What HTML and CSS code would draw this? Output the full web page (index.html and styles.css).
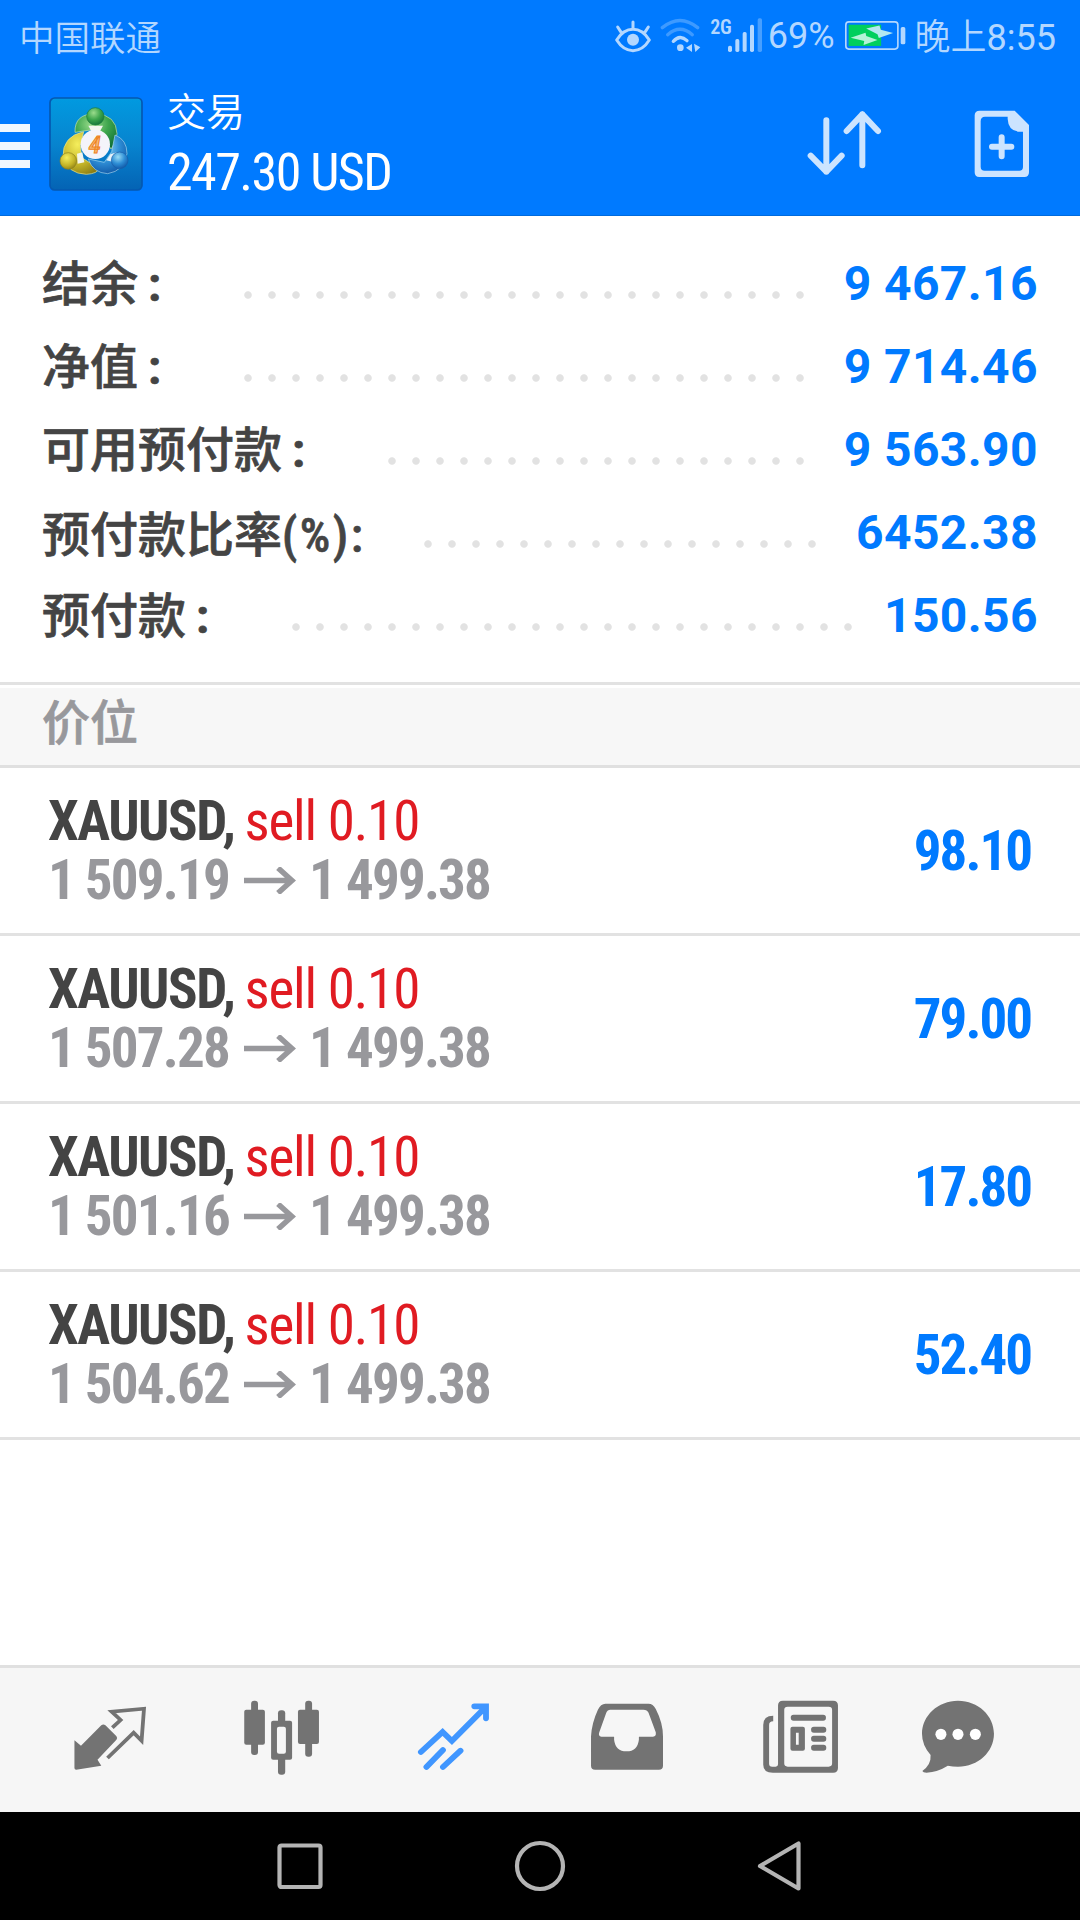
FILE: index.html
```html
<!DOCTYPE html>
<html lang="zh-CN">
<head>
<meta charset="utf-8">
<title>交易</title>
<link rel="stylesheet" href="styles.css">
</head>
<body>
<div class="screen">
  <header class="header">
    <div class="status">
      <span class="carrier">中国联通</span>
      <svg class="status-icons" viewBox="0 0 453 120" width="151" height="40">
        <g fill="none" stroke="#b3d7ff" stroke-width="9" stroke-linecap="round" stroke-linejoin="round">
          <path d="M14 78Q34 46 63 46Q92 46 112 78Q92 110 63 110Q34 110 14 78Z"/>
          <path d="M63 24V42M17 39L26 53M109 39L100 53"/>
        </g>
        <circle cx="63" cy="77" r="18" fill="#b3d7ff"/>
        <g fill="none" stroke="#b3d7ff" stroke-width="10" stroke-linecap="round">
          <path d="M151 41Q204 -2 257 41" opacity=".35"/>
          <path d="M167 62Q204 30 241 62" opacity=".35"/>
          <path d="M184 82Q204 60 225 80"/>
        </g>
        <circle cx="205" cy="101" r="10" fill="#b3d7ff"/>
        <path d="M222 101L240 90V114ZM246 89L265 100L250 114Z" fill="#b3d7ff"/>
        <text class="net" x="295" y="59">2G</text>
        <g fill="#b3d7ff">
          <rect x="348" y="95" width="12" height="19" rx="5"/>
          <rect x="370" y="75" width="12" height="39" rx="5"/>
          <rect x="392" y="54" width="12" height="60" rx="5"/>
          <rect x="414" y="32" width="12" height="82" rx="5"/>
          <rect x="437" y="13" width="13" height="101" rx="5" opacity=".4"/>
        </g>
      </svg>
      <span class="percent">69%</span>
      <svg class="battery" viewBox="0 0 184 90" width="61" height="30">
        <rect x="2.500" y="2.500" width="157" height="82" rx="9" fill="none" stroke="#b3d7ff" stroke-width="5"/>
        <rect x="11" y="11" width="98" height="64" fill="#00cf5d"/>
        <path d="M17 50L62 35L64 45L98 57L56 72L58 60Z" fill="#b3f3d8"/>
        <path d="M64 22L104 13L108 26L145 36L102 51L98 40Z" fill="#b3e8f0"/>
        <rect x="168" y="18" width="14" height="52" rx="5" fill="#b3d7ff"/>
      </svg>
      <span class="clock">晚上<b>8:55</b></span>
    </div>
    <div class="appbar">
      <div class="menu"><i></i><i></i><i></i></div>
      <svg class="logo" viewBox="0 0 282 282" width="94" height="94">
        <defs>
          <linearGradient id="bg" x1="0" y1="0" x2="0" y2="1"><stop offset="0" stop-color="#019ae0"/><stop offset=".5" stop-color="#0784cf"/><stop offset="1" stop-color="#0463b4"/></linearGradient>
          <radialGradient id="gr" cx=".4" cy=".3" r=".8"><stop offset="0" stop-color="#9bdc8c"/><stop offset=".5" stop-color="#3da54c"/><stop offset="1" stop-color="#0c6b35"/></radialGradient>
          <radialGradient id="ye" cx=".4" cy=".3" r=".8"><stop offset="0" stop-color="#f5ee5c"/><stop offset=".6" stop-color="#c3b327"/><stop offset="1" stop-color="#857814"/></radialGradient>
          <radialGradient id="bl" cx=".4" cy=".3" r=".8"><stop offset="0" stop-color="#9adcf5"/><stop offset=".5" stop-color="#2f8fd6"/><stop offset="1" stop-color="#0a4d9e"/></radialGradient>
        </defs>
        <rect x="3" y="3" width="276" height="276" rx="14" fill="url(#bg)" stroke="#0558b0" stroke-width="5"/>
        <path d="M78 106Q76 50 140 50Q202 54 204 110Q204 136 186 156L150 98H130Z" fill="url(#gr)" stroke="#cfe6a8" stroke-width="2"/>
        <path d="M104 104Q40 118 42 180Q56 230 112 232Q146 230 150 214L98 182L94 146Z" fill="url(#ye)" stroke="#efe88e" stroke-width="2"/>
        <path d="M118 186Q132 228 176 230Q226 222 234 170Q234 128 198 114L188 164L166 196Z" fill="url(#bl)" stroke="#a5d6ee" stroke-width="2"/>
        <path d="M118 86L162 86L150 108H130ZM84 170L100 166L106 196L86 200Z" fill="#f4f6ee"/>
        <path d="M184 172L204 166L196 196L172 190Z" fill="#e4f2fa"/>
        <circle cx="139" cy="58" r="26" fill="url(#gr)" stroke="#1b7a3a" stroke-width="2"/>
        <circle cx="58" cy="192" r="25" fill="url(#ye)" stroke="#8c8020" stroke-width="2"/>
        <circle cx="212" cy="190" r="25" fill="url(#bl)" stroke="#1a5ca8" stroke-width="2"/>
        <circle cx="139" cy="142" r="44" fill="#f4f4fa"/>
        <text class="logo-digit" x="137" y="169">4</text>
      </svg>
      <div class="heading">
        <div class="title">交易</div>
        <div class="total">247.30 USD</div>
      </div>
      <svg class="sort" viewBox="80 85 235 210" width="78.333" height="70">
        <path d="M144 122V276M97 228L144 276L190 228M252 257V104M205 154L252 104L299 154" fill="none" stroke="#cce4ff" stroke-width="18" stroke-linecap="round" stroke-linejoin="round"/>
      </svg>
      <svg class="add" viewBox="580 85 175 215" width="58.333" height="71.667">
        <path fill="#cce4ff" fill-rule="evenodd" d="M600 93H705L748 136V278Q748 292 734 292H599Q585 292 585 278V107Q585 93 600 93ZM616 111H684V118Q686 156 722 156H730V262Q730 273 719 273H615Q603 273 603 261V125Q603 111 616 111Z"/>
        <path d="M666 173V230M637 201H695" stroke="#cce4ff" stroke-width="18" stroke-linecap="round"/>
      </svg>
    </div>
  </header>

  <section class="summary">
    <div class="line"><span class="label">结余<b>:</b></span><i class="dots" style="--n:24"></i><span class="value">9 467.16</span></div>
    <div class="line"><span class="label">净值<b>:</b></span><i class="dots" style="--n:24"></i><span class="value">9 714.46</span></div>
    <div class="line"><span class="label">可用预付款<b>:</b></span><i class="dots" style="--n:18"></i><span class="value">9 563.90</span></div>
    <div class="line"><span class="label">预付款比率<em>(%):</em></span><i class="dots" style="--n:17"></i><span class="value">6452.38</span></div>
    <div class="line short"><span class="label">预付款<b>:</b></span><i class="dots" style="--n:24"></i><span class="value">150.56</span></div>
  </section>

  <h2 class="section">价位</h2>

  <ul class="positions">
    <li class="position">
      <div class="info">
        <div class="deal"><span class="symbol">XAUUSD,</span><span class="side">sell 0.10</span></div>
        <div class="prices"><span>1 509.19</span><svg class="arrow" viewBox="0 0 52 27" width="52" height="27"><path d="M0 13.500H47M34 1L48 13.500L34 26"/></svg><span>1 499.38</span></div>
      </div>
      <span class="profit">98.10</span>
    </li>
    <li class="position">
      <div class="info">
        <div class="deal"><span class="symbol">XAUUSD,</span><span class="side">sell 0.10</span></div>
        <div class="prices"><span>1 507.28</span><svg class="arrow" viewBox="0 0 52 27" width="52" height="27"><path d="M0 13.500H47M34 1L48 13.500L34 26"/></svg><span>1 499.38</span></div>
      </div>
      <span class="profit">79.00</span>
    </li>
    <li class="position">
      <div class="info">
        <div class="deal"><span class="symbol">XAUUSD,</span><span class="side">sell 0.10</span></div>
        <div class="prices"><span>1 501.16</span><svg class="arrow" viewBox="0 0 52 27" width="52" height="27"><path d="M0 13.500H47M34 1L48 13.500L34 26"/></svg><span>1 499.38</span></div>
      </div>
      <span class="profit">17.80</span>
    </li>
    <li class="position">
      <div class="info">
        <div class="deal"><span class="symbol">XAUUSD,</span><span class="side">sell 0.10</span></div>
        <div class="prices"><span>1 504.62</span><svg class="arrow" viewBox="0 0 52 27" width="52" height="27"><path d="M0 13.500H47M34 1L48 13.500L34 26"/></svg><span>1 499.38</span></div>
      </div>
      <span class="profit">52.40</span>
    </li>
  </ul>

  <nav class="tabs">
    <svg class="tab" viewBox="194.400 145 250 250" preserveAspectRatio="none">
      <path fill="currentColor" d="M216 272L235 288L294 227Q300 222 306 227L338 260Q342 265 338 270L283 330L294 348L221 360Q216 360 216 355Z"/>
      <path fill="none" stroke="currentColor" stroke-width="11" d="M326 234L350 211L324 186L418 177L411 273L388 249L312 325"/>
    </svg>
    <svg class="tab" viewBox="693.800 145 250 250" preserveAspectRatio="none">
      <g fill="currentColor">
        <rect x="729" y="153" width="20" height="163" rx="9"/><rect x="709" y="180" width="60" height="105" rx="6"/>
        <rect x="886" y="153" width="20" height="168" rx="9"/><rect x="865" y="180" width="61" height="103" rx="6"/>
        <rect x="807" y="182" width="21" height="40" rx="9"/><rect x="807" y="320" width="21" height="55" rx="9"/>
      </g>
      <path fill="currentColor" fill-rule="evenodd" d="M793 213H842Q848 213 848 219V324Q848 330 842 330H793Q787 330 787 324V219Q787 213 793 213ZM810 231Q804 231 804 237V306Q804 312 810 312H824Q830 312 830 306V237Q830 231 824 231Z"/>
    </svg>
    <svg class="tab active" viewBox="1193.200 145 250 250" preserveAspectRatio="none">
      <path fill="none" stroke="currentColor" stroke-width="17" stroke-linecap="round" stroke-linejoin="miter" d="M1222 307L1285 247L1312 274L1408 174M1238 352L1286 301M1286 352L1337 303M1377 170H1411V206"/>
    </svg>
    <svg class="tab" viewBox="127.600 145 250 250" preserveAspectRatio="none">
      <path fill="currentColor" fill-rule="evenodd" d="M148 260Q150 220 168 180Q176 162 190 162H315Q328 162 336 178Q357 220 357 260V348Q357 360 345 360H160Q148 360 148 348ZM204 180H300Q311 180 315 189L336 248Q338 261 328 261H287V270Q283 305 251 305Q219 305 215 270V261H178Q168 260 172 248L192 190Q196 180 204 180Z"/>
    </svg>
    <svg class="tab" viewBox="632.800 145 250 250" preserveAspectRatio="none">
      <g fill="currentColor">
        <path fill-rule="evenodd" d="M705 153H851Q865 153 865 167V355Q865 369 851 369H676Q648 369 648 345V226Q648 198 677 198V215Q665 215 665 226V342Q665 351 674 351H684Q691 351 691 344V167Q691 153 705 153ZM719 171Q709 171 709 181V341Q709 351 719 351H838Q848 351 848 341V181Q848 171 838 171Z"/>
        <rect x="728" y="195" width="102" height="18" rx="8"/>
        <path fill-rule="evenodd" d="M733 231H763Q769 231 769 237V297Q769 303 763 303H733Q727 303 727 297V237Q727 231 733 231ZM743 249V285H751V249Z"/>
        <rect x="787" y="231" width="44" height="18" rx="8"/><rect x="787" y="258" width="44" height="18" rx="8"/><rect x="787" y="285" width="44" height="18" rx="8"/>
      </g>
    </svg>
    <svg class="tab" viewBox="1088.700 145 250 250" preserveAspectRatio="none">
      <path fill="currentColor" d="M1213.500 153C1272 153 1318 198 1318 252S1272 351 1213.500 351Q1198 351 1184 348Q1155 367 1122 369Q1112 369 1110 364Q1136 345 1134 316Q1109 286 1109 252C1109 198 1156 153 1213.500 153Z"/>
      <g fill="#fff"><ellipse cx="1164" cy="254" rx="16" ry="17"/><ellipse cx="1213.500" cy="254" rx="16" ry="17"/><ellipse cx="1264" cy="254" rx="16" ry="17"/></g>
    </svg>
  </nav>

  <div class="sysnav">
    <svg viewBox="0 0 60 60" width="60" height="60"><rect x="9.500" y="9.500" width="41" height="41.500" rx="2" /></svg>
    <svg viewBox="0 0 60 60" width="60" height="60"><circle cx="30" cy="30" r="23"/></svg>
    <svg viewBox="0 0 60 60" width="60" height="60"><path d="M48.500 7.500V52.500L10 30Z"/></svg>
  </div>
</div>
</body>
</html>
```
FILE: styles.css
```css
* { box-sizing: border-box; }

body {
  margin: 0;
  background: #fff;
  font-family: Roboto, "Noto Sans CJK SC", sans-serif;
}

svg { display: block; flex: none; }

.screen {
  width: 1080px;
  height: 1920px;
  display: flex;
  flex-direction: column;
}

/* header */
.header {
  height: 216px;
  flex: none;
  background: #007aff;
  border-bottom: 1px solid #006bdd;
  color: #fff;
}

.status {
  height: 76px;
  display: flex;
  align-items: center;
  padding: 0 24px 0 19px;
  color: #b3d7ff;
  font-size: 36px;
  line-height: 76px;
}

.carrier {
  font: 350 35.500px/72px "Noto Sans CJK SC", sans-serif;
  margin: -4px auto 0 0;
}

.status-icons { margin-top: -8px; }

.net {
  font: 600 60px "Roboto Condensed", Roboto, sans-serif;
  letter-spacing: -1px;
  fill: #b3d7ff;
}

.percent { margin: -4px 10px 0 5px; }

.battery { margin: -5px 9px 0 0; }

.clock { font-weight: 350; }
.clock b { font-weight: 400; }

.appbar {
  height: 139px;
  display: flex;
  align-items: flex-start;
}

.menu {
  width: 30px;
  display: flex;
  flex-direction: column;
  gap: 10px;
  padding-top: 48px;
}

.menu i { height: 8px; background: #f0f7ff; }

.logo { margin: 21px 0 0 19px; }

.logo-digit {
  font: italic 500 74px "Roboto Condensed", Roboto, sans-serif;
  fill: #f8ba72;
  stroke: #ee8222;
  stroke-width: 3px;
  text-anchor: middle;
}

.heading {
  flex: 1;
  padding: 7px 0 0 24px;
}

.title {
  height: 59px;
  font: 350 39px/53px "Noto Sans CJK SC", sans-serif;
}

.total {
  font: 400 52px/62px "Roboto Condensed", Roboto, sans-serif;
  letter-spacing: -1.550px;
}

.sort { margin: 32px 89px 0 0; }
.add { margin: 32px 49px 0 0; }

/* account summary */
.summary {
  height: 466px;
  flex: none;
  padding: 26px 42px 0 43px;
}

.line {
  height: 83px;
  display: flex;
  align-items: center;
  line-height: 83px;
}

.label {
  font: 500 48px/83px "Noto Sans CJK SC", sans-serif;
  color: #444;
  -webkit-text-stroke: .700px #444;
  margin: -2px 0 0 -1px;
}

.label b {
  font-family: Roboto, sans-serif;
  font-weight: 700;
  margin-left: 10px;
}

.label em {
  font: 500 48px/48px "Roboto Condensed", Roboto, sans-serif;
  letter-spacing: 2.500px;
}

.dots {
  width: calc(24px * var(--n));
  height: 8px;
  margin: 22px 32px 0 auto;
  background: radial-gradient(circle at 12px 4px, #e2e2e2 3.300px, transparent 4.200px) 0 0 / 24px 8px;
}

.short .dots { margin-right: 24px; }

.value {
  font-size: 48px;
  font-weight: 700;
  letter-spacing: .400px;
  color: #007aff;
}

/* section heading */
.section {
  height: 86px;
  flex: none;
  margin: 0;
  padding-left: 42px;
  border-top: 3px solid #e2e2e2;
  border-bottom: 3px solid #e0e0e0;
  background: linear-gradient(#fff 3px, #f7f7f7 3px);
  color: #98989c;
  -webkit-text-stroke: .700px #98989c;
  font: 500 48px/69px "Noto Sans CJK SC", sans-serif;
}

/* open positions */
.positions {
  flex: 1;
  margin: 0;
  padding: 0;
  list-style: none;
}

.position {
  height: 168px;
  display: flex;
  align-items: center;
  justify-content: space-between;
  padding: 0 49px 0 48px;
  border-bottom: 3px solid #e2e2e2;
  font: 700 55px/59px "Roboto Condensed", Roboto, sans-serif;
  letter-spacing: -1.500px;
}

.deal, .prices { display: flex; align-items: center; }

.symbol { color: #444; }

.side {
  margin-left: 10px;
  font-weight: 400;
  letter-spacing: -1.100px;
  color: #e01b22;
}

.prices {
  color: #98989c;
  letter-spacing: -1.800px;
}

.arrow {
  margin: 0 13px 0 15px;
  fill: none;
  stroke: #98989c;
  stroke-width: 5.500px;
}

.profit {
  padding-top: 1px;
  letter-spacing: -2px;
  color: #007aff;
}

/* bottom tabs */
.tabs {
  height: 147px;
  flex: none;
  display: grid;
  grid-template-columns: 172px 172px 172px 174px 174px 140px;
  align-items: center;
  justify-items: center;
  padding-left: 24px;
  border-top: 3px solid #e0e0e0;
  background: #f6f6f6;
  color: #737373;
}

.tab { width: 86.100px; height: 83.330px; }

.tab.active { color: #4096ff; }

/* system navigation */
.sysnav {
  height: 108px;
  flex: none;
  display: flex;
  align-items: center;
  justify-content: center;
  gap: 180px;
  background: #000;
}

.sysnav svg {
  fill: none;
  stroke: #b4b4b4;
  stroke-width: 4.200px;
  stroke-linejoin: round;
}
```
